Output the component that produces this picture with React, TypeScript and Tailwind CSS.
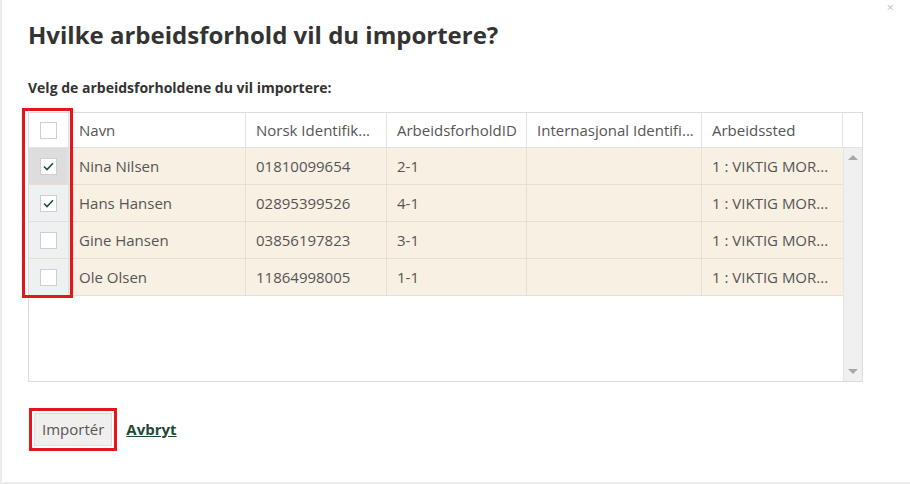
import { useState } from "react"

type Row = {
  id: number
  navn: string
  norsk: string
  forholdId: string
  internasjonal: string
  sted: string
}

const rows: Row[] = [
  { id: 1, navn: "Nina Nilsen", norsk: "01810099654", forholdId: "2-1", internasjonal: "", sted: "1 : VIKTIG MOR..." },
  { id: 2, navn: "Hans Hansen", norsk: "02895399526", forholdId: "4-1", internasjonal: "", sted: "1 : VIKTIG MOR..." },
  { id: 3, navn: "Gine Hansen", norsk: "03856197823", forholdId: "3-1", internasjonal: "", sted: "1 : VIKTIG MOR..." },
  { id: 4, navn: "Ole Olsen", norsk: "11864998005", forholdId: "1-1", internasjonal: "", sted: "1 : VIKTIG MOR..." },
]

function Checkbox({ checked, onClick }: { checked: boolean; onClick?: () => void }) {
  return (
    <button
      onClick={onClick}
      className="w-[17px] h-[17px] bg-white border border-[#cfcfcf] flex items-center justify-center"
    >
      {checked && (
        <svg width="11" height="9" viewBox="0 0 11 9" fill="none">
          <path d="M1 4.5 L4 7.5 L10 1.2" stroke="#1f4d3c" strokeWidth="1.6" />
        </svg>
      )}
    </button>
  )
}

export default function App() {
  const [selected, setSelected] = useState<number[]>([1, 2])

  function toggle(id: number) {
    setSelected((prev) => (prev.includes(id) ? prev.filter((x) => x !== id) : [...prev, id]))
  }

  const cell = "flex items-center pl-[10px] border-r border-[#e2e0dc] whitespace-nowrap overflow-hidden"

  return (
    <div className="w-[910px] h-[484px] bg-white border-l-2 border-b-2 border-[#ececec] relative font-['Open_Sans',sans-serif] overflow-hidden">
      <span className="absolute right-[16px] top-[1px] text-[#c4c4c4] text-[13px] leading-none">×</span>

      <div className="pl-[26px] pt-[19px]">
        <h1 className="text-[24px] leading-[32px] font-bold text-[#333]">
          Hvilke arbeidsforhold vil du importere?
        </h1>
        <p className="mt-[27px] text-[14px] leading-[19px] font-bold text-[#333]">
          Velg de arbeidsforholdene du vil importere:
        </p>

        <div className="relative mt-[15px] w-[835px] h-[270px] border border-[#dcdcdc] flex flex-col text-[15px] text-[#555]">
          <div className="flex h-[35px] border-b border-[#e2e2e2] shrink-0">
            <div className="w-[40px] flex items-center justify-center border-r border-[#e2e2e2]">
              <Checkbox checked={false} />
            </div>
            <div className={`${cell} w-[177px] border-[#e2e2e2]`}>Navn</div>
            <div className={`${cell} w-[141px] border-[#e2e2e2]`}>Norsk Identifik...</div>
            <div className={`${cell} w-[140px] border-[#e2e2e2]`}>ArbeidsforholdID</div>
            <div className={`${cell} w-[175px] border-[#e2e2e2]`}>Internasjonal Identifi...</div>
            <div className={`${cell} w-[141px] border-[#e2e2e2]`}>Arbeidssted</div>
            <div className="w-[19px]" />
          </div>

          <div className="flex flex-1">
            <div className="flex-1 flex flex-col">
              {rows.map((row, i) => (
                <div key={row.id} className="flex h-[37px] border-b border-[#e4e0d8] bg-[#f8f0e3]">
                  <div
                    className={`w-[40px] flex items-center justify-center border-r border-[#e2e2e2] ${
                      i === 0 ? "bg-[#dddddd]" : "bg-[#edf1f1]"
                    }`}
                  >
                    <Checkbox checked={selected.includes(row.id)} onClick={() => toggle(row.id)} />
                  </div>
                  <div className={`${cell} w-[177px]`}>{row.navn}</div>
                  <div className={`${cell} w-[141px]`}>{row.norsk}</div>
                  <div className={`${cell} w-[140px]`}>{row.forholdId}</div>
                  <div className={`${cell} w-[175px]`}>{row.internasjonal}</div>
                  <div className={`${cell} w-[141px] border-r-0`}>{row.sted}</div>
                </div>
              ))}
            </div>
            <div className="w-[19px] bg-[#f0f0f0] border-l border-[#e6e6e6] flex flex-col items-center justify-between py-[7px]">
              <div className="w-0 h-0 border-l-[5px] border-r-[5px] border-b-[5px] border-l-transparent border-r-transparent border-b-[#a8a8a8]" />
              <div className="w-0 h-0 border-l-[5px] border-r-[5px] border-t-[5px] border-l-transparent border-r-transparent border-t-[#a8a8a8]" />
            </div>
          </div>

          <div className="absolute left-[-7px] top-[-5px] w-[51px] h-[190px] border-[3px] border-[#e8141c] pointer-events-none" />
        </div>

        <div className="mt-[31px] flex items-center gap-[14px]">
          <div className="relative ml-[6px]">
            <button className="h-[33px] px-[7px] bg-[#f0efed] border border-[#dedede] text-[15px] text-[#555]">
              Importér
            </button>
            <div className="absolute -inset-[5px] border-[3px] border-[#e8141c] pointer-events-none" />
          </div>
          <a href="#" className="text-[15px] font-bold underline text-[#1e4a34]">
            Avbryt
          </a>
        </div>
      </div>
    </div>
  )
}
